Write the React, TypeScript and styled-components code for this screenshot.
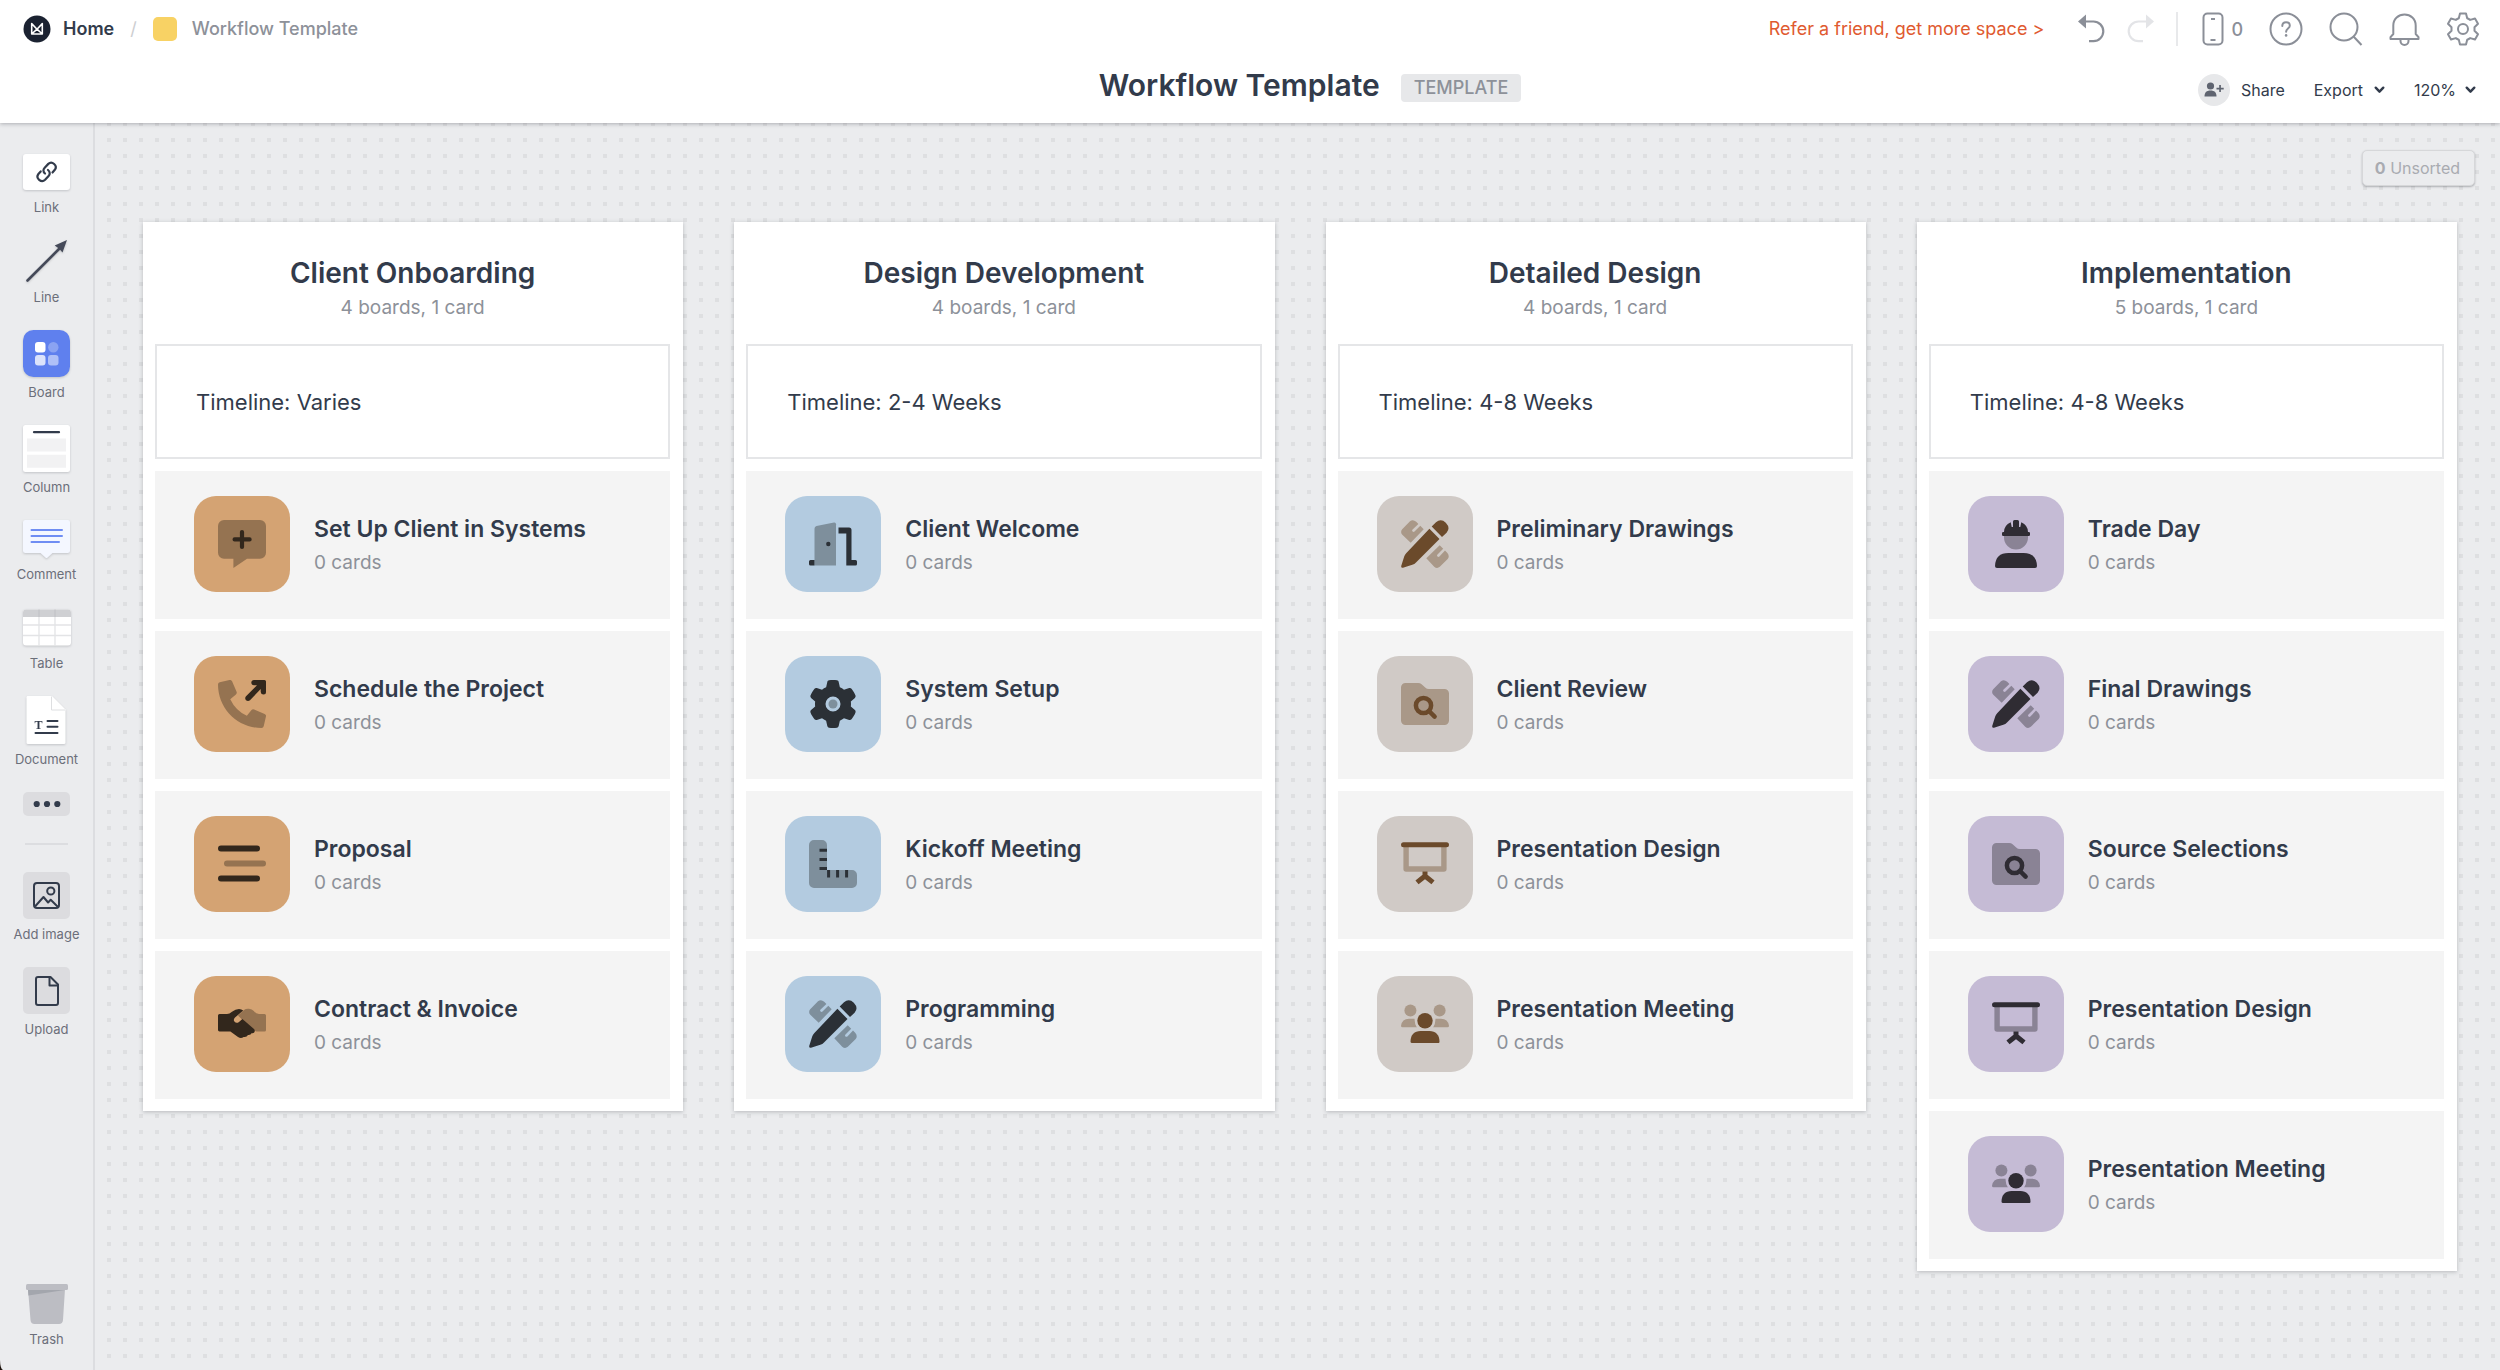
import React from "react";
import styled, { createGlobalStyle } from "styled-components";
import { FaGear } from "react-icons/fa6";

const ink = "#323b4b";
const muted = "#8d9199";

const GlobalStyle = createGlobalStyle`
  * { box-sizing: border-box; }
  body { margin: 0; background: #1c120c; font-family: Inter, "Liberation Sans", sans-serif; color: ${ink}; }
  button, select { font: inherit; color: inherit; border: 0; margin: 0; padding: 0; background: none; cursor: pointer; }
  a { color: inherit; text-decoration: none; }
  h1, h2, h3, p, ul { margin: 0; padding: 0; }
  ul { list-style: none; }
  svg { display: block; flex: none; }
`;

const App = styled.div`
  min-height: 100vh;
  display: flex;
  flex-direction: column;
  background: #ebecee;
  border-bottom-left-radius: 3px 10px;
  overflow: hidden;
`;

/* ---------- header ---------- */

const Header = styled.header`
  position: relative;
  z-index: 2;
  height: 123px;
  background: #fff;
  box-shadow: 0 1px 4px rgba(30, 34, 44, 0.3);
`;

const TopRow = styled.div`
  display: flex;
  align-items: center;
  justify-content: space-between;
  height: 58px;
  padding: 0 20px 0 23px;
`;

const Crumbs = styled.nav`
  display: flex;
  align-items: center;
  font-size: 18px;
  line-height: 24px;
`;

const HomeLink = styled.a`
  display: flex;
  align-items: center;
  gap: 12px;
  font-weight: 600;
  color: ${ink};
`;

const Slash = styled.span`
  margin: 0 16px;
  color: #cdced1;
`;

const Swatch = styled.span`
  width: 24px;
  height: 24px;
  margin-right: 15px;
  border-radius: 5px;
  background: #f8d264;
`;

const Current = styled.span`
  font-weight: 500;
  color: ${muted};
`;

const Tools = styled.div`
  display: flex;
  align-items: center;
`;

const ReferLink = styled.a`
  margin-right: 34px;
  font-size: 18px;
  line-height: 24px;
  color: #e05a30;
`;

const IconButton = styled.button<{ $gap?: number; $faint?: boolean }>`
  display: flex;
  align-items: center;
  gap: 7px;
  margin-right: ${(p) => p.$gap ?? 26}px;
  color: ${(p) => (p.$faint ? "#e3e4e7" : "#8b8f98")};
  font-size: 18px;
  font-weight: 500;
`;

const Divider = styled.span`
  width: 2px;
  height: 34px;
  margin-right: 24px;
  background: #e8e9eb;
`;

const TitleRow = styled.div`
  display: grid;
  grid-template-columns: 1fr auto 1fr;
  align-items: center;
  height: 56px;
  padding: 0 24px 0 144px;
`;

const TitleGroup = styled.div`
  grid-column: 2;
  display: flex;
  align-items: center;
  gap: 21px;
`;

const PageTitle = styled.h1`
  font-size: 30px;
  line-height: 38px;
  font-weight: 600;
  padding-bottom: 2px;
`;

const Tag = styled.span`
  margin-top: 4px;
  padding: 0 13px;
  border-radius: 4px;
  background: #e7e8ea;
  color: ${muted};
  font-size: 18px;
  line-height: 28px;
  font-weight: 500;
`;

const Actions = styled.div`
  display: flex;
  align-items: center;
  justify-content: flex-end;
  gap: 29px;
  margin-top: 8px;
  font-size: 16px;
  line-height: 24px;
`;

const Action = styled.button`
  display: flex;
  align-items: center;
  gap: 11px;
`;

const ShareBadge = styled.span`
  display: grid;
  place-items: center;
  width: 32px;
  height: 32px;
  border-radius: 50%;
  background: #e7e8ea;
`;

const ZoomField = styled.label`
  display: flex;
  align-items: center;
  gap: 8px;
`;

const ZoomSelect = styled.select`
  appearance: none;
  outline: none;
`;

/* ---------- sidebar ---------- */

const Body = styled.div`
  flex: 1;
  display: flex;
`;

const Sidebar = styled.aside`
  width: 95px;
  flex: none;
  display: flex;
  flex-direction: column;
  align-items: center;
  padding: 31px 0 22px;
  border-right: 2px solid #dcdde0;
`;

const ToolList = styled.div`
  display: flex;
  flex-direction: column;
  align-items: center;
  gap: 24px;
`;

const Tool = styled.button`
  display: flex;
  flex-direction: column;
  align-items: center;
  gap: 6px;
  font-size: 13px;
  line-height: 18px;
  color: #6b6f7a;
  white-space: nowrap;
`;

const ToolArt = styled.span<{ $height: number }>`
  display: flex;
  flex-direction: column;
  align-items: center;
  height: ${(p) => p.$height}px;
  filter: drop-shadow(0 1px 1px rgba(30, 34, 44, 0.2));
`;

const FlatArt = styled.span`
  display: grid;
  place-items: center;
  width: 47px;
  height: 47px;
  border-radius: 5px;
  background: #dcdcdf;
`;

const MoreButton = styled.button`
  display: flex;
  align-items: center;
  justify-content: center;
  width: 47px;
  height: 24px;
  border-radius: 5px;
  background: #dcdcdf;
`;

const SideRule = styled.hr`
  width: 43px;
  height: 2px;
  margin: 3px 0;
  border: 0;
  background: #dcdde0;
`;

const TrashSlot = styled.div`
  margin-top: auto;
`;

/* ---------- canvas ---------- */

const Canvas = styled.main`
  flex: 1;
  min-width: 0;
  padding: 27px 43px 60px 48px;
  background-image: linear-gradient(#ebecee 12px, transparent 12px),
    linear-gradient(90deg, #dedfe1 4px, #ebecee 4px);
  background-size: 16px 16px;
  background-position: 12px 3px;
`;

const Unsorted = styled.button`
  display: block;
  height: 36px;
  margin: 0 -18px 36px auto;
  padding: 0 14px 0 12px;
  border: 1px solid #d6d7d9;
  border-radius: 5px;
  background: #ebecee;
  box-shadow: 0 1px 2px rgba(30, 34, 44, 0.3);
  color: #a9abb1;
  font-size: 16px;
  line-height: 24px;
`;

const Columns = styled.div`
  display: grid;
  grid-template-columns: repeat(4, minmax(0, 1fr));
  align-items: start;
  gap: 51px;
`;

const Column = styled.section`
  padding: 0 13px 12px 12px;
  background: #fff;
  box-shadow: 0 1px 4px rgba(30, 34, 44, 0.25);
`;

const ColumnHead = styled.div`
  padding: 34px 0 22px;
  text-align: center;
`;

const ColumnTitle = styled.h2`
  font-size: 28px;
  line-height: 34px;
  font-weight: 600;
`;

const Count = styled.p`
  margin-top: 4px;
  font-size: 19px;
  line-height: 28px;
  color: ${muted};
`;

const Note = styled.p`
  height: 115px;
  padding: 0 39px;
  border: 2px solid #e5e6e8;
  font-size: 22px;
  line-height: 113px;
`;

const Boards = styled.ul`
  display: flex;
  flex-direction: column;
  gap: 12px;
  margin-top: 12px;
`;

const BoardLink = styled.a`
  display: flex;
  gap: 24px;
  height: 148px;
  padding: 25px 39px;
  background: #f4f4f4;
`;

const Tile = styled.span<{ $color: string }>`
  display: grid;
  place-items: center;
  flex: none;
  width: 96px;
  height: 96px;
  border-radius: 22px;
  background: ${(p) => p.$color};
`;

const BoardText = styled.div`
  padding-top: 17px;
`;

const BoardTitle = styled.h3`
  font-size: 23px;
  line-height: 32px;
  font-weight: 600;
`;

/* ---------- board icons, drawn on a 48 grid ---------- */

type Palette = { bg: string; dark: string; mid: string };
type Glyph = (p: Palette) => React.ReactNode;

const ruler =
  "M1.2 9.2 9 1.3Q12 -1 15.2 1.8L17.4 4 11.6 9.6a1.3 1.3 0 0 0 1.9 1.9L19.3 5.8 22.7 9.3 9.7 22.7 1.3 14.8Q-1 12 1.2 9.2Z";

const glyphs: Record<string, Glyph> = {
  chat: ({ dark, mid }) => (
    <>
      <path fill={mid} d="M6 0h36a6 6 0 0 1 6 6v26.700a6 6 0 0 1-6 6H29L15.400 48v-9.300H6a6 6 0 0 1-6-6V6a6 6 0 0 1 6-6z" />
      <path stroke={dark} strokeWidth="4.200" strokeLinecap="round" d="M16.600 19.400h15M24 12v15" />
    </>
  ),
  phone: ({ dark, mid }) => (
    <>
      <path
        fill={mid}
        transform="scale(.09375)"
        d="M497.390 361.800l-112-48a24 24 0 0 0-28 6.900l-49.600 60.600A370.660 370.660 0 0 1 130.600 204.110l60.600-49.600a23.940 23.940 0 0 0 6.900-28l-48-112A24.160 24.160 0 0 0 122.600.610l-104 24A24 24 0 0 0 0 48c0 256.500 207.900 464 464 464a24 24 0 0 0 23.400-18.600l24-104a24.290 24.290 0 0 0-14.010-27.600z"
      />
      <path fill={dark} d="M36 0h10.500Q48 0 48 1.500V12q0 2.500-2.500 2.500T42.700 12V9L32 20.200q-2 1.500-4 0-1.600-2 0-4L39 5.300h-3Q33.300 5 33.300 2.600 33.500 0 36 0z" />
    </>
  ),
  lines: ({ dark, mid }) => (
    <g strokeWidth="6" strokeLinecap="round">
      <path stroke={dark} d="M3 8.500h36M3 38.500h36" />
      <path stroke={mid} d="M9 23.500h36" />
    </g>
  ),
  handshake: ({ dark, mid }) => (
    <>
      <path fill={mid} d="M20 15.500 26 10q2-1.500 5-1.200 3 .2 4.800 2.300Q38 14 41 14h5.500q1.500 0 1.500 1.500V30q0 1.500-1.500 1.500H38L24 19.500z" />
      <path fill={dark} d="M1.500 14H9q2.500 0 5-2.200Q17.500 9 21 9q2.500 0 4.200 1.500L17 17.600q-2 2-.6 4 2 2.200 4.600.3L24.400 19 36 29q1.600 1.700.2 3.600-1 1-2.700.6-.6 2-3.500 1.700-1.500 2.700-4.400 2-2.600 2-5.600 0l-7.600-5.400H1.500Q0 31.500 0 30V15.500Q0 14 1.500 14z" />
    </>
  ),
  door: ({ dark, mid }) => (
    <>
      <path fill={mid} d="M7.500 6 25 2.600q2-.3 2 1.700v41.200H5.500V8.700Q5.500 6.600 7.500 6z" />
      <circle cx="19.300" cy="24" r="2.200" fill={dark} />
      <path fill={dark} d="M5.500 40v5.500h-4Q0 45.500 0 44v-2.500Q0 40 1.500 40zM29.500 7.600H40q2.500 0 2.500 2.500V40h4q1.500 0 1.500 1.500V44q0 1.500-1.500 1.500h-9.200v-32h-7.800z" />
    </>
  ),
  gear: ({ dark, mid }) => (
    <>
      <FaGear size={48} color={dark} />
      <circle cx="24" cy="24" r="4.500" fill={mid} />
    </>
  ),
  square: ({ dark, mid }) => (
    <>
      <path fill={mid} d="M5 0h8a5 5 0 0 1 5 5v25h25a5 5 0 0 1 5 5v8a5 5 0 0 1-5 5H5a5 5 0 0 1-5-5V5a5 5 0 0 1 5-5z" />
      <path stroke={dark} strokeWidth="3" d="M18 10.200h-7.500M18 19.400h-7.500M18 28.500h-7.500M19.600 30v7.500M28.600 30v7.500M37.600 30v7.500" />
    </>
  ),
  pencil: ({ dark, mid }) => (
    <>
      <path fill={mid} d={ruler} />
      <path fill={mid} d={ruler} transform="matrix(0 -1 -1 0 48 48)" />
      <path fill={dark} d="M28.400 8.800 38.500 19 15 42.400q-1.500 1.600-3.700 2.300L2 47.800Q0 48.200.2 46l3-9.400q.6-2 2.200-3.700zM30.700 6.500 35 2.200q5-4 9.800.5 5 5.300.8 10L41 17z" />
    </>
  ),
  folder: ({ dark, mid }) => (
    <>
      <path fill={mid} d="M4.500 3h12.600q2 0 3.500 1.300l3.600 3.200Q25.700 9 28 9h15.500A4.500 4.500 0 0 1 48 13.500v27a4.500 4.500 0 0 1-4.500 4.500h-39A4.500 4.500 0 0 1 0 40.500v-33A4.500 4.500 0 0 1 4.500 3z" />
      <circle cx="22.500" cy="25.500" r="7.600" fill="none" stroke={dark} strokeWidth="4.500" />
      <path stroke={dark} strokeWidth="4.500" strokeLinecap="round" d="m28 31 5.600 5.600" />
    </>
  ),
  screen: ({ dark, mid }) => (
    <>
      <path fill="none" stroke={mid} strokeWidth="5.400" strokeLinejoin="round" d="M5.100 7v22H42.900V7" />
      <path stroke={dark} strokeWidth="5" strokeLinecap="round" d="M2.500 4.700h43" />
      <path fill="none" stroke={dark} strokeWidth="5" strokeLinejoin="round" d="M24 31.500v4.800M16 42.400 24 36l8 6.400" />
    </>
  ),
  people: ({ dark, mid, bg }) => (
    <>
      <g fill={mid}>
        <circle cx="9.400" cy="10.600" r="6" />
        <circle cx="38.600" cy="10.600" r="6" />
        <path d="M1.500 27.300Q0 27.300 0 25.800 1 18.700 8 18.700h5.500Q14 25 16 27.300zM46.500 27.300Q48 27.300 48 25.800 47 18.700 40 18.700h-5.500Q34 25 32 27.300z" />
      </g>
      <circle cx="24" cy="20.800" r="10" fill={bg} />
      <g fill={dark}>
        <circle cx="24" cy="20.800" r="7.700" />
        <path d="M11 43q-1.500 0-1.500-1.500C9.500 35 13.500 31 19.500 31h9c6 0 10 4 10 10.500 0 1-.5 1.500-1.500 1.500z" />
      </g>
    </>
  ),
  worker: ({ dark, mid }) => (
    <>
      <path fill={mid} d="M12 15h24v2.500a12 12 0 0 1-24 0z" />
      <path fill={dark} d="M22.500 0h3q1.500 0 1.500 1.500V7h1.300l1-4.700Q36 5.500 36 12h.8q1.200 0 1.200 1.200v1.600q0 1.200-1.200 1.200H11.200Q10 16 10 14.800v-1.600Q10 12 11.200 12h.8q0-6.500 6.700-9.700l1 4.700H21V1.500Q21 0 22.500 0z" />
      <path fill={dark} d="M5 48q-2 0-2-2 .5-13 13.500-13h15Q44.500 33 45 46q0 2-2 2z" />
    </>
  ),
};

function BoardGlyph({ name, palette }: { name: string; palette: Palette }) {
  return (
    <svg width="48" height="48" viewBox="0 0 48 48" fill="none" aria-hidden="true">
      {glyphs[name](palette)}
    </svg>
  );
}

/* ---------- data ---------- */

const tan: Palette = { bg: "#d4a373", dark: "#32271c", mid: "#957351" };
const blue: Palette = { bg: "#b3cbe0", dark: "#2b3036", mid: "#7e8f9c" };
const stone: Palette = { bg: "#d0cac6", dark: "#6b4a2b", mid: "#a99888" };
const lilac: Palette = { bg: "#c5bbd5", dark: "#2f2c33", mid: "#8a8395" };

const columns = [
  {
    title: "Client Onboarding",
    count: "4 boards, 1 card",
    note: "Timeline: Varies",
    palette: tan,
    boards: [
      ["Set Up Client in Systems", "chat"],
      ["Schedule the Project", "phone"],
      ["Proposal", "lines"],
      ["Contract & Invoice", "handshake"],
    ],
  },
  {
    title: "Design Development",
    count: "4 boards, 1 card",
    note: "Timeline: 2-4 Weeks",
    palette: blue,
    boards: [
      ["Client Welcome", "door"],
      ["System Setup", "gear"],
      ["Kickoff Meeting", "square"],
      ["Programming", "pencil"],
    ],
  },
  {
    title: "Detailed Design",
    count: "4 boards, 1 card",
    note: "Timeline: 4-8 Weeks",
    palette: stone,
    boards: [
      ["Preliminary Drawings", "pencil"],
      ["Client Review", "folder"],
      ["Presentation Design", "screen"],
      ["Presentation Meeting", "people"],
    ],
  },
  {
    title: "Implementation",
    count: "5 boards, 1 card",
    note: "Timeline: 4-8 Weeks",
    palette: lilac,
    boards: [
      ["Trade Day", "worker"],
      ["Final Drawings", "pencil"],
      ["Source Selections", "folder"],
      ["Presentation Design", "screen"],
      ["Presentation Meeting", "people"],
    ],
  },
];

/* ---------- small drawings ---------- */

const Logo = () => (
  <svg width="28" height="28" viewBox="0 0 28 28" aria-hidden="true">
    <circle cx="14" cy="14" r="13.500" fill="#1b2231" />
    <path fill="none" stroke="#fff" strokeWidth="1.600" strokeLinejoin="round" d="M8.700 19V8.600L14 14.200 19.300 8.600V19zM8.700 19 14 14.200 19.300 19" />
  </svg>
);

const Undo = ({ flip }: { flip?: boolean }) => (
  <svg width="27" height="30" viewBox="0 0 27 30" fill="none" transform={flip ? "scale(-1 1)" : undefined} aria-hidden="true">
    <path fill="currentColor" d="M0 7.500 8 .5v14z" />
    <path stroke="currentColor" strokeWidth="2.200" d="M6 7.500h9.500a9.800 9.800 0 0 1 0 19.600H11" />
  </svg>
);

const Phone = () => (
  <svg width="22" height="34" viewBox="0 0 22 34" fill="none" stroke="currentColor" strokeWidth="2" aria-hidden="true">
    <rect x="1.500" y="1.500" width="19" height="31" rx="4" />
    <path d="M9 7h4M8.500 28h5" />
  </svg>
);

const Help = () => (
  <svg width="34" height="34" viewBox="0 0 34 34" fill="none" stroke="currentColor" strokeWidth="2" aria-hidden="true">
    <circle cx="17" cy="17" r="15.500" />
    <path strokeLinecap="round" d="M13.300 14c0-2.200 1.600-3.700 3.800-3.700s3.700 1.400 3.700 3.400c0 2.800-3.700 3-3.700 6" />
    <circle cx="17.100" cy="23.400" r="1.300" fill="currentColor" stroke="none" />
  </svg>
);

const Search = () => (
  <svg width="34" height="34" viewBox="0 0 34 34" fill="none" stroke="currentColor" strokeWidth="2" aria-hidden="true">
    <circle cx="15" cy="15" r="13.500" />
    <path d="m24.500 24.500 8 8.500" />
  </svg>
);

const Bell = () => (
  <svg width="31" height="34" viewBox="0 0 31 34" fill="none" stroke="currentColor" strokeWidth="2" strokeLinejoin="round" aria-hidden="true">
    <path d="M1.500 27h28v-1.800L26.700 22v-8.500C26.700 7 21.500 2.500 15.500 2.500S4.300 7 4.300 13.500V22L1.500 25.200zM11.500 27.500v1.500a4 4 0 0 0 8 0v-1.500" />
  </svg>
);

const Settings = () => (
  <svg width="34" height="34" viewBox="0 0 34 34" fill="none" stroke="currentColor" strokeWidth="2" strokeLinejoin="round" aria-hidden="true">
    <path d="M14 1.500h6l1.200 4.800q1.600.6 3 1.600L29 6.500l3 5.200-3.500 3.500v3.600l3.500 3.500-3 5.200-4.800-1.400q-1.400 1-3 1.600L20 32.500h-6l-1.200-4.800q-1.600-.6-3-1.600L5 27.500l-3-5.200 3.500-3.500v-3.600L2 11.700l3-5.200 4.800 1.400q1.400-1 3-1.600z" />
    <circle cx="17" cy="17" r="5" />
  </svg>
);

const Chevron = () => (
  <svg width="11" height="8" viewBox="0 0 11 8" fill="none" stroke={ink} strokeWidth="2.400" strokeLinecap="round" strokeLinejoin="round" aria-hidden="true">
    <path d="m1.700 1.700 3.800 4 3.800-4" />
  </svg>
);

const AddPerson = () => (
  <svg width="20" height="16" viewBox="0 0 20 16" fill="#5f6470" aria-hidden="true">
    <circle cx="6.500" cy="4" r="3.600" />
    <path d="M.5 14.500c0-4 2-6 6-6s6 2 6 6zM15.200 3h1.700v2.700h2.800v1.700h-2.800v2.700h-1.700V7.400h-2.700V5.700h2.700z" />
  </svg>
);

const LinkArt = () => (
  <svg width="47" height="36" viewBox="0 0 47 36" fill="none" aria-hidden="true">
    <rect width="47" height="36" rx="3" fill="#fff" />
    <g stroke={ink} strokeWidth="2.200" strokeLinecap="round">
      <path d="M22 19.500c-2.200-1.700-1.900-4.100-.3-5.800l3.600-3.800c3.700-3.500 9.700 1.700 6.500 5.900l-2.300 2.700" />
      <path d="M25 16c2.200 1.700 2.200 4.300.6 6l-3.500 3.800c-3.700 3.500-9.900-1.600-6.700-5.800l2.300-2.600" />
    </g>
  </svg>
);

const LineArt = () => (
  <svg width="42" height="42" viewBox="0 0 42 42" aria-hidden="true">
    <path stroke="#454a59" strokeWidth="2.600" strokeLinecap="round" d="M1.500 40.500 33 9" />
    <path fill="#454a59" d="m41 0-4.500 12.500-3.300-3.800-4.500-3.200z" />
  </svg>
);

const BoardArt = () => (
  <svg width="47" height="47" viewBox="0 0 47 47" fill="#fff" aria-hidden="true">
    <rect width="47" height="47" rx="10.500" fill="#5f80ee" />
    <rect x="12" y="12" width="10.500" height="10.500" rx="3" />
    <circle cx="30.300" cy="17.200" r="5.200" opacity=".28" />
    <rect x="12" y="25" width="10.500" height="10.500" rx="3" opacity=".78" />
    <rect x="25" y="25" width="10.500" height="10.500" rx="3" opacity=".5" />
  </svg>
);

const ColumnArt = () => (
  <svg width="47" height="47" viewBox="0 0 47 47" aria-hidden="true">
    <rect width="47" height="47" rx="2.500" fill="#fff" />
    <path stroke={ink} strokeWidth="2.200" strokeLinecap="round" d="M11 7.200h25" />
    <path fill="#f2f2f3" d="M4 13.500h39v13H4zM4 29.700h39v13H4z" />
  </svg>
);

const CommentArt = () => (
  <svg width="47" height="38" viewBox="0 0 47 38" aria-hidden="true">
    <path fill="#f4f7ff" d="M2.500 0h42A2.500 2.500 0 0 1 47 2.500v28a2.500 2.500 0 0 1-2.500 2.500h-15L23.500 38.500 17.500 33h-15A2.500 2.500 0 0 1 0 30.500v-28A2.500 2.500 0 0 1 2.500 0z" />
    <path stroke="#6f8df3" strokeWidth="2" strokeLinecap="round" d="M8.500 10h30.500M8.500 16h30.500M8.500 22h27.500" />
  </svg>
);

const TableArt = () => (
  <svg width="48" height="41" viewBox="0 0 48 41" aria-hidden="true">
    <rect y="2.500" width="48" height="36" rx="3" fill="#fff" />
    <path fill="#cfd0d3" d="M3 2.500h42a3 3 0 0 1 3 3V10H0V5.500a3 3 0 0 1 3-3z" />
    <path stroke="#bfc0c4" d="M16 2.500V10M32 2.500V10" />
    <path stroke="#e3e4e6" strokeWidth="1.300" d="M16 10v28.500M32 10v28.500M0 18h48M0 28.500h48" />
  </svg>
);

const LetterT = styled.text`
  font: 700 12px "Liberation Serif", serif;
`;

const DocumentArt = () => (
  <svg width="40" height="48" viewBox="0 0 40 48" aria-hidden="true">
    <path fill="#fff" d="M1.500 0H26l13.500 13.500V46.500q0 1.500-1.500 1.500H2q-1.500 0-1.500-1.500V1.500Q.5 0 1.500 0z" />
    <path fill="#fff" stroke="#dedfe1" d="M25.500.5V14H39" />
    <path stroke={ink} strokeWidth="2" strokeLinecap="round" d="M21.500 25h10M21.500 30.700h10M9.500 37h22" />
    <LetterT x="8.500" y="32.500" fill={ink}>T</LetterT>
  </svg>
);

const Dots = () => (
  <svg width="28" height="8" viewBox="0 0 28 8" fill={ink} aria-hidden="true">
    <circle cx="3.700" cy="4" r="3.100" />
    <circle cx="14" cy="4" r="3.100" />
    <circle cx="24.300" cy="4" r="3.100" />
  </svg>
);

const ImageArt = () => (
  <svg width="27" height="27" viewBox="0 0 27 27" fill="none" stroke={ink} strokeWidth="2" strokeLinejoin="round" aria-hidden="true">
    <rect x="1" y="1" width="25" height="25" rx="3" />
    <circle cx="17.800" cy="9" r="3.600" />
    <path d="m2 24.500 8.500-9.500 4.600 5.500 2.600-2.700L25 25" />
  </svg>
);

const FileArt = () => (
  <svg width="24" height="30" viewBox="0 0 24 30" fill="none" stroke={ink} strokeWidth="2" strokeLinejoin="round" aria-hidden="true">
    <path d="M3 1h12.500l7.500 7.500V27a2 2 0 0 1-2 2H3a2 2 0 0 1-2-2V3a2 2 0 0 1 2-2z" />
    <path d="M14.500 1v8.500H23" />
  </svg>
);

const TrashArt = () => (
  <svg width="42" height="40" viewBox="0 0 42 40" aria-hidden="true">
    <path fill="#bcbdc3" d="M2 5h37l-2 31q-.3 4-4 4H8.500q-3.700 0-4-4z" />
    <path fill="#a3a6ad" d="M2 6h37L2.400 11.500z" />
    <rect width="42" height="6" rx="1.500" fill="#bcbdc3" />
  </svg>
);

const tools: [string, number, React.ComponentType][] = [
  ["Link", 38, LinkArt],
  ["Line", 42, LineArt],
  ["Board", 47, BoardArt],
  ["Column", 47, ColumnArt],
  ["Comment", 39, CommentArt],
  ["Table", 41, TableArt],
  ["Document", 48, DocumentArt],
];

export default function WorkflowPage() {
  return (
    <App>
      <GlobalStyle />
      <Header>
        <TopRow>
          <Crumbs aria-label="Breadcrumb">
            <HomeLink href="#home">
              <Logo />
              Home
            </HomeLink>
            <Slash>/</Slash>
            <Swatch />
            <Current>Workflow Template</Current>
          </Crumbs>
          <Tools>
            <ReferLink href="#refer">Refer a friend, get more space &gt;</ReferLink>
            <IconButton aria-label="Undo" $gap={22}><Undo /></IconButton>
            <IconButton aria-label="Redo" $gap={22} $faint><Undo flip /></IconButton>
            <Divider />
            <IconButton aria-label="Mobile uploads"><Phone />0</IconButton>
            <IconButton aria-label="Help"><Help /></IconButton>
            <IconButton aria-label="Search"><Search /></IconButton>
            <IconButton aria-label="Notifications"><Bell /></IconButton>
            <IconButton aria-label="Settings" $gap={0}><Settings /></IconButton>
          </Tools>
        </TopRow>
        <TitleRow>
          <TitleGroup>
            <PageTitle>Workflow Template</PageTitle>
            <Tag>TEMPLATE</Tag>
          </TitleGroup>
          <Actions>
            <Action>
              <ShareBadge><AddPerson /></ShareBadge>
              Share
            </Action>
            <Action>Export<Chevron /></Action>
            <ZoomField>
              <ZoomSelect aria-label="Zoom" defaultValue="120%">
                <option>120%</option>
              </ZoomSelect>
              <Chevron />
            </ZoomField>
          </Actions>
        </TitleRow>
      </Header>
      <Body>
        <Sidebar>
          <ToolList>
            {tools.map(([label, height, Art]) => (
              <Tool key={label}>
                <ToolArt $height={height}><Art /></ToolArt>
                {label}
              </Tool>
            ))}
            <MoreButton aria-label="More tools"><Dots /></MoreButton>
            <SideRule />
            <Tool>
              <FlatArt><ImageArt /></FlatArt>
              Add image
            </Tool>
            <Tool>
              <FlatArt><FileArt /></FlatArt>
              Upload
            </Tool>
          </ToolList>
          <TrashSlot>
            <Tool>
              <TrashArt />
              Trash
            </Tool>
          </TrashSlot>
        </Sidebar>
        <Canvas>
          <Unsorted><b>0</b> Unsorted</Unsorted>
          <Columns>
            {columns.map((column) => (
              <Column key={column.title}>
                <ColumnHead>
                  <ColumnTitle>{column.title}</ColumnTitle>
                  <Count>{column.count}</Count>
                </ColumnHead>
                <Note>{column.note}</Note>
                <Boards>
                  {column.boards.map(([title, glyph]) => (
                    <li key={title}>
                      <BoardLink href="#board">
                        <Tile $color={column.palette.bg}>
                          <BoardGlyph name={glyph} palette={column.palette} />
                        </Tile>
                        <BoardText>
                          <BoardTitle>{title}</BoardTitle>
                          <Count>0 cards</Count>
                        </BoardText>
                      </BoardLink>
                    </li>
                  ))}
                </Boards>
              </Column>
            ))}
          </Columns>
        </Canvas>
      </Body>
    </App>
  );
}
